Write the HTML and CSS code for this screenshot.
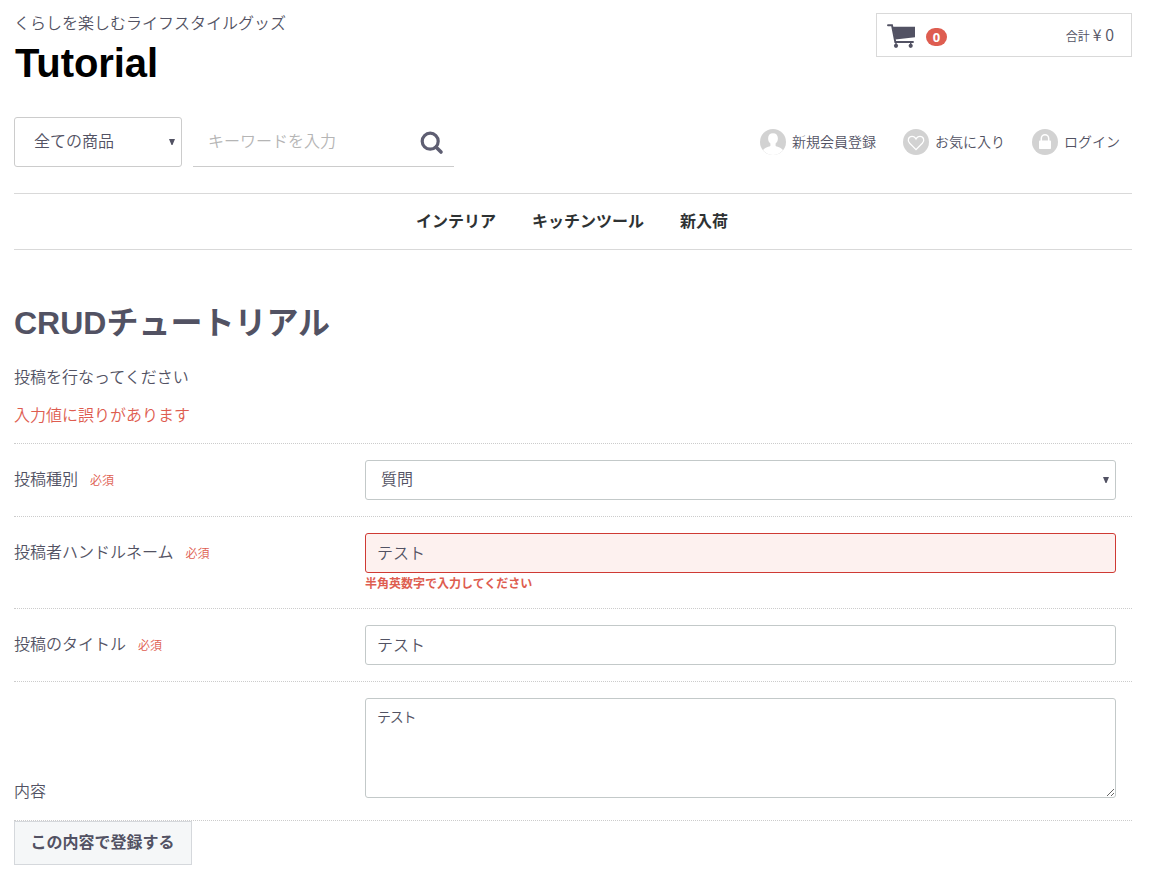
FILE: index.html
```html
<!DOCTYPE html>
<html lang="ja">
<head>
<meta charset="utf-8">
<title>Tutorial</title>
<link rel="stylesheet" href="styles.css">
</head>
<body>
<div class="page">
  <header class="header">
    <div class="brand">
      <p class="tagline">くらしを楽しむライフスタイルグッズ</p>
      <div class="logo">Tutorial</div>
    </div>
    <div class="cart">
      <svg class="cart-icon" viewBox="0 0 28 25" width="28" height="25">
        <path d="M1 1.3H5L8.3 18H26" fill="none" stroke="#525263" stroke-width="1.9" stroke-linecap="round"/>
        <path d="M5.6 2.8H28V13.3L8.3 15.4Z" fill="#525263"/>
        <path d="M9 18V22M23.700 18V22" stroke="#525263" stroke-width="1.4"/>
        <circle cx="9" cy="21.800" r="2.1" fill="#525263"/>
        <circle cx="23.7" cy="21.800" r="2.1" fill="#525263"/>
      </svg>
      <span class="badge">0</span>
      <span class="total"><span class="total-label">合計</span><span class="price">¥ 0</span></span>
    </div>
  </header>

  <div class="tools">
    <div class="category"><span>全ての商品</span>
      <svg class="caret" viewBox="0 0 6 6" width="6" height="6"><path d="M0 0H6L3.5 6H2.5Z" fill="#525263"/></svg>
    </div>
    <div class="search">
      <input class="search-input" type="text" placeholder="キーワードを入力">
      <svg class="search-icon" viewBox="0 0 24 24" width="24" height="24">
        <circle cx="10.2" cy="10.2" r="8" fill="none" stroke="#5e5e72" stroke-width="3.2"/>
        <path d="M16.2 16.2L21 21" stroke="#5e5e72" stroke-width="3.6" stroke-linecap="round"/>
      </svg>
    </div>
    <ul class="member">
      <li>
        <svg class="round-icon" viewBox="0 0 26 26" width="26" height="26">
          <circle cx="13" cy="13" r="13" fill="#d2d2d2"/>
          <path d="M13 4.3c-3 0-4.9 2-4.9 4.9 0 2.4.9 4.2 2.3 5.3v2.3c-.5 1.1-5.9 1.5-7.4 4.5a13 13 0 0 0 20 0c-1.5-3-6.9-3.400-7.400-4.500v-2.300c1.400-1.100 2.300-2.900 2.300-5.300 0-2.900-1.900-4.900-4.900-4.900Z" fill="#fff"/>
        </svg>
        <span>新規会員登録</span>
      </li>
      <li>
        <svg class="round-icon" viewBox="0 0 26 26" width="26" height="26">
          <circle cx="13" cy="13" r="13" fill="#d2d2d2"/>
          <path d="M13 20.6L6.7 14.3C3.8 11.3 5.6 7.3 9 7.3c1.9 0 3.2 1.1 4 2.7.8-1.6 2.1-2.7 4-2.7 3.4 0 5.2 4 2.3 7Z" fill="none" stroke="#fff" stroke-width="1.3"/>
        </svg>
        <span>お気に入り</span>
      </li>
      <li>
        <svg class="round-icon" viewBox="0 0 26 26" width="26" height="26">
          <circle cx="13" cy="13" r="13" fill="#d2d2d2"/>
          <rect x="7" y="11.5" width="12" height="8.5" rx=".8" fill="#fff"/>
          <path d="M9.3 12V9.500a3.700 3.700 0 0 1 7.400 0V12" fill="none" stroke="#fff" stroke-width="1.5"/>
        </svg>
        <span>ログイン</span>
      </li>
    </ul>
  </div>

  <nav class="nav"><a>インテリア</a><a>キッチンツール</a><a>新入荷</a></nav>

  <main>
    <h1 class="title">CRUDチュートリアル</h1>
    <p class="lead">投稿を行なってください</p>
    <p class="lead error">入力値に誤りがあります</p>
    <form class="form">
      <div class="row">
        <div class="label">投稿種別<span class="required">必須</span></div>
        <div class="field">
          <div class="control select"><span>質問</span>
            <svg class="caret" viewBox="0 0 6 6" width="6" height="6"><path d="M0 0H6L3.5 6H2.5Z" fill="#525263"/></svg>
          </div>
        </div>
      </div>
      <div class="row row-error">
        <div class="label">投稿者ハンドルネーム<span class="required">必須</span></div>
        <div class="field">
          <input class="control invalid" type="text" value="テスト">
          <p class="message">半角英数字で入力してください</p>
        </div>
      </div>
      <div class="row">
        <div class="label">投稿のタイトル<span class="required">必須</span></div>
        <div class="field"><input class="control" type="text" value="テスト"></div>
      </div>
      <div class="row row-body">
        <div class="label">内容</div>
        <div class="field"><textarea class="control area">テスト</textarea></div>
      </div>
      <button class="submit" type="button">この内容で登録する</button>
    </form>
  </main>
</div>
</body>
</html>
```
FILE: styles.css
```css
* { box-sizing: border-box; }
body {
  margin: 0;
  background: #fff;
  color: #525263;
  font: 350 16px/24px "Liberation Sans", "Noto Sans CJK JP", sans-serif;
}
p, h1, ul { margin: 0; padding: 0; }
input, textarea, button { font: inherit; color: inherit; }
.page { width: 1118px; margin-left: 14px; }

.header { display: flex; justify-content: space-between; height: 117px; }
.brand { padding-top: 12px; }
.logo { color: #000; font-size: 40px; font-weight: 700; line-height: 48px; margin: 3px 0 0 1px; letter-spacing: -0.1px; }
.cart {
  display: flex;
  align-items: center;
  width: 256px;
  height: 44px;
  margin-top: 13px;
  padding: 0 17px 0 10px;
  border: 1px solid #d9d9d9;
}
.cart-icon { margin-top: 3px; }
.badge {
  width: 21px;
  height: 18px;
  margin: 4px 0 0 11px;
  border-radius: 9px;
  background: #de5d50;
  color: #fff;
  font: 700 13px/18px "Open Sans", sans-serif;
  text-align: center;
}
.total { display: flex; align-items: baseline; margin-left: auto; }
.total-label { font-size: 12px; }
.price { font: 350 16px/24px "Noto Sans CJK JP", sans-serif; margin-left: 3px; }

.tools { display: flex; height: 76px; }
.category {
  display: flex;
  align-items: center;
  justify-content: space-between;
  width: 168px;
  height: 50px;
  padding: 0 6px 0 19px;
  border: 1px solid #ccc;
  border-radius: 3px;
}
.search {
  display: flex;
  align-items: center;
  width: 261px;
  height: 50px;
  margin-left: 11px;
  padding: 0 10px 0 15px;
  border-bottom: 1px solid #ccc;
}
.search-input { flex: 1; min-width: 0; height: 40px; padding: 0; border: 0; background: none; }
.search-input::placeholder { color: #b5b5b5; }
.search-icon { margin-top: 2px; }
.member {
  display: flex;
  gap: 26px;
  height: 50px;
  margin-left: auto;
  padding-right: 11px;
  list-style: none;
  font-size: 14px;
}
.member li { display: flex; align-items: center; gap: 7px; }
.member li span { margin: 0 1px 0 -1px; }

.nav {
  display: flex;
  justify-content: center;
  gap: 36px;
  height: 57px;
  padding-right: 2px;
  border: solid #d9d9d9;
  border-width: 1px 0;
  color: #2e3233;
  font-weight: 700;
  line-height: 56px;
}

.title { margin-top: 48px; font-size: 32px; font-weight: 700; line-height: 50px; }
.lead { margin-top: 18px; }
.lead + .lead { margin-top: 14px; }
.error, .required, .message { color: #de5d50; }

.form { margin-top: 15px; border-top: 1px dotted #ccc; }
.row { display: flex; height: 73px; padding: 16px 16px 0 0; border-bottom: 1px dotted #ccc; }
.row-error { height: 92px; }
.row-body { height: 139px; }
.label { width: 351px; padding-top: 8px; }
.row-body .label { padding-top: 82px; }
.required { margin-left: 12px; font-size: 12px; }
.field { flex: 1; }
.control {
  display: block;
  width: 100%;
  height: 40px;
  padding: 0 11px 3px;
  border: 1px solid #c3c9c9;
  border-radius: 3px;
  background: #fff;
}
.select { display: flex; align-items: center; justify-content: space-between; padding: 0 6px 0 15px; }
.invalid { border-color: #cf3a34; background: #fdf1ef; }
.message { font-size: 12px; font-weight: 700; line-height: 22px; }
.area { height: 100px; padding-top: 6px; font-size: 14px; letter-spacing: -1.3px; resize: vertical; }
.submit {
  display: block;
  width: 178px;
  height: 44px;
  padding: 0 1px 0 0;
  border: 1px solid #d5d8dc;
  background: #f5f7f8;
  font-weight: 700;
}
```
